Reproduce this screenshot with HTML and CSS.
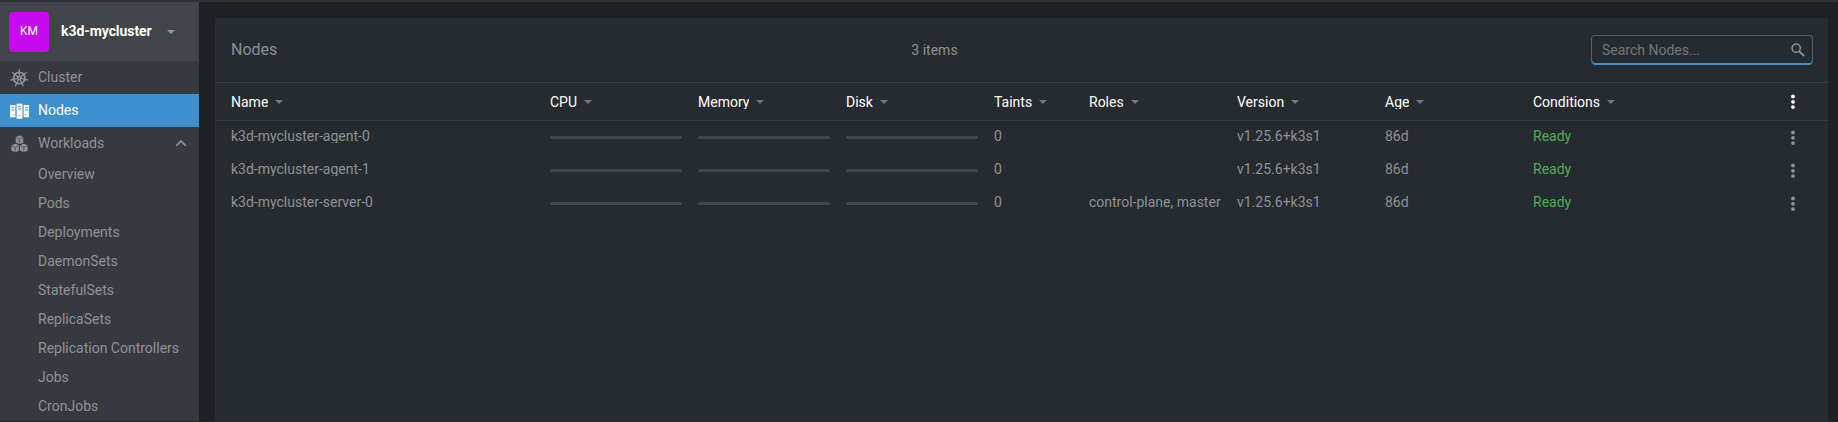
FILE: index.html
```
<!DOCTYPE html>
<html lang="en">
<head>
<meta charset="utf-8">
<title>Nodes</title>
<link rel="stylesheet" href="styles.css">
</head>
<body>
<svg class="defs" aria-hidden="true">
  <symbol id="caret" viewBox="0 0 8 4"><path d="M0 0h8L4 4z"/></symbol>
  <symbol id="dots" viewBox="0 0 6 16"><circle cx="3" cy="2.5" r="1.9"/><circle cx="3" cy="7.8" r="1.9"/><circle cx="3" cy="13.1" r="1.9"/></symbol>
  <symbol id="cube" viewBox="0 0 8 9"><path d="M4 0L8 1.9v5.2L4 9 0 7.100V1.900z"/><path d="M.6 2.300L4 3.900l3.400-1.600M4 3.900v4.500" fill="none" stroke="#36393e" stroke-width=".6"/></symbol>
</svg>
<div class="app">
  <aside class="sidebar">
    <div class="cluster">
      <div class="avatar">KM</div>
      <div class="cluster-name">k3d-mycluster</div>
      <svg class="cluster-caret"><use href="#caret"/></svg>
    </div>
    <nav>
      <a class="item">
        <svg class="icon" viewBox="0 0 20 20"><g fill="none" stroke="currentColor"><circle cx="10.300" cy="10" r="5.700" stroke-width="1.800"/><circle cx="10.300" cy="10" r="1.600" stroke-width="1.500"/><path stroke-width="1.300" d="M10.300 8.300V.8M11.630 8.940l5.860-4.680M11.960 10.380l7.310 1.670M11.040 11.530l3.250 6.760M9.560 11.530l-3.250 6.760M8.640 10.380l-7.310 1.670M8.970 8.940L3.110 4.260"/></g></svg>
        <span>Cluster</span>
      </a>
      <a class="item active">
        <svg class="icon" viewBox="0 0 20 20"><path fill="currentColor" d="M1 4h5.400v12.200H1zM7.600 2.700h5.800v15H7.600zM14.600 4H20v12.200h-5.400z"/><path fill="#3d90ce" d="M2.400 6.200h3v.9h-3zM2.400 8.500h3v.9h-3zM9 5.200h3v.9H9zM9 7.500h3v.9H9zM16 6.200h3v.9h-3zM16 8.500h3v.9h-3zM4.400 13.300h1v1h-1zM10 14h1v1h-1zM16 13.300h1v1h-1z"/></svg>
        <span>Nodes</span>
      </a>
      <a class="item">
        <svg class="icon" viewBox="0 0 20 20" fill="currentColor"><use href="#cube" x="6.500" y="1.300" width="8" height="9"/><use href="#cube" x="2.200" y="9.500" width="8" height="9"/><use href="#cube" x="10.800" y="9.500" width="8" height="9"/></svg>
        <span>Workloads</span>
        <svg class="chevron" viewBox="0 0 12 8"><path d="M1.200 6.800L6 2l4.800 4.800" fill="none" stroke="currentColor" stroke-width="1.700"/></svg>
      </a>
      <div class="sub">
        <a>Overview</a><a>Pods</a><a>Deployments</a><a>DaemonSets</a><a>StatefulSets</a><a>ReplicaSets</a><a>Replication Controllers</a><a>Jobs</a><a>CronJobs</a>
      </div>
    </nav>
  </aside>
  <main class="content">
    <section class="panel">
      <header class="toolbar">
        <h1>Nodes</h1>
        <div class="count">3 items</div>
        <label class="search">
          <span>Search Nodes...</span>
          <svg viewBox="0 0 14 14"><g fill="none" stroke="currentColor"><circle cx="5.200" cy="5.200" r="4.100" stroke-width="1.500"/><path d="M8.300 8.300l4.700 4.700" stroke-width="1.900"/></g></svg>
        </label>
      </header>
      <div class="row head">
        <div class="cell"><span>Name</span><svg class="sort"><use href="#caret"/></svg></div>
        <div class="cell"><span>CPU</span><svg class="sort"><use href="#caret"/></svg></div>
        <div class="cell"><span>Memory</span><svg class="sort"><use href="#caret"/></svg></div>
        <div class="cell"><span>Disk</span><svg class="sort"><use href="#caret"/></svg></div>
        <div class="cell"><span>Taints</span><svg class="sort"><use href="#caret"/></svg></div>
        <div class="cell"><span>Roles</span><svg class="sort"><use href="#caret"/></svg></div>
        <div class="cell"><span>Version</span><svg class="sort"><use href="#caret"/></svg></div>
        <div class="cell"><span>Age</span><svg class="sort"><use href="#caret"/></svg></div>
        <div class="cell"><span>Conditions</span><svg class="sort"><use href="#caret"/></svg></div>
        <svg class="menu"><use href="#dots"/></svg>
      </div>
      <div class="row">
        <div class="cell"><span>k3d-mycluster-agent-0</span></div><div class="bar"></div><div class="bar"></div><div class="bar"></div>
        <div class="cell"><span>0</span></div><div class="cell"></div><div class="cell"><span>v1.25.6+k3s1</span></div><div class="cell"><span>86d</span></div><div class="cell ready"><span>Ready</span></div>
        <svg class="menu"><use href="#dots"/></svg>
      </div>
      <div class="row">
        <div class="cell"><span>k3d-mycluster-agent-1</span></div><div class="bar"></div><div class="bar"></div><div class="bar"></div>
        <div class="cell"><span>0</span></div><div class="cell"></div><div class="cell"><span>v1.25.6+k3s1</span></div><div class="cell"><span>86d</span></div><div class="cell ready"><span>Ready</span></div>
        <svg class="menu"><use href="#dots"/></svg>
      </div>
      <div class="row">
        <div class="cell"><span>k3d-mycluster-server-0</span></div><div class="bar"></div><div class="bar"></div><div class="bar"></div>
        <div class="cell"><span>0</span></div><div class="cell"><span>control-plane, master</span></div><div class="cell"><span>v1.25.6+k3s1</span></div><div class="cell"><span>86d</span></div><div class="cell ready"><span>Ready</span></div>
        <svg class="menu"><use href="#dots"/></svg>
      </div>
    </section>
  </main>
</div>
</body>
</html>
```
FILE: styles.css
```
* { box-sizing: border-box; }
body { margin: 0; font: 14px/1 Roboto, sans-serif; color: #8e9297; background: #1e2124; overflow: hidden; }
.defs { display: none; }
.app { display: flex; height: 422px; border-top: 2px solid #2e3136; border-bottom: 1px solid #26282c; }
.sidebar { width: 199px; flex: none; background: #36393e; overflow: hidden; }
.cluster { display: flex; align-items: center; height: 59px; padding: 1px 0 0 9px; background: #414448; }
.avatar { width: 40px; height: 40px; border-radius: 4px; background: #c80aee; color: #fff; font-size: 12px; display: flex; align-items: center; justify-content: center; padding-bottom: 2px; }
.cluster-name { margin-left: 12px; padding-bottom: 2px; color: #fff; font-weight: 700; letter-spacing: -.06px; width: 91px; white-space: nowrap; }
.cluster-caret { width: 8px; height: 4px; margin: 0 0 1px 15px; fill: #8e9297; }
.item { display: flex; align-items: center; height: 33px; padding: 0 12px 0 9px; }
.item span { margin-left: 9px; padding-bottom: 2px; flex: 1; line-height: 18px; }
.item.active { background: #3d90ce; color: #fff; }
.icon { width: 20px; height: 20px; flex: none; }
.chevron { width: 12px; height: 8px; flex: none; margin-bottom: 1px; }
.sub { display: flex; flex-direction: column; padding-left: 38px; }
.sub a { height: 29px; line-height: 29px; white-space: nowrap; }
.content { flex: 1; padding: 16px 10px 0 16px; }
.panel { height: 100%; background: #262b2f; }
.toolbar { display: grid; grid-template-columns: 1fr 1fr 1fr; align-items: center; height: 65px; padding: 0 15px 0 16px; border-bottom: 1px solid #36393e; }
h1 { margin: 0; font-size: 16px; font-weight: 400; color: #87909c; }
.count { justify-self: center; margin-right: 175px; }
.search { justify-self: end; display: flex; align-items: center; justify-content: space-between; width: 222px; height: 30px; padding: 0 7px 2px 10px; border: 1px solid #5b5e63; border-bottom: 0; border-radius: 4px; box-shadow: inset 0 -2px #3d90ce; color: #72767b; }
.search svg { width: 14px; height: 14px; color: #8e9297; }
.row { display: grid; grid-template-columns: 319px 148px 148px 148px 95px 148px 148px 148px 256.5px 10px; align-items: center; height: 33px; padding-left: 16px; }
.cell { display: flex; align-items: center; white-space: nowrap; }
.cell span { overflow: hidden; }
.row .cell { padding-bottom: 3px; }
.head { height: 38px; border-bottom: 1px solid #36393e; color: #fff; }
.row.head .cell { padding-bottom: 0; }
.sort { width: 8px; height: 4px; margin-left: 7px; fill: #72767b; }
.bar { width: 132px; height: 3px; border-radius: 2px; background: #43474b; }
.menu { width: 6px; height: 16px; fill: currentColor; }
.cell.ready { color: #4caf50; }
.ready span { overflow: visible; }
```
